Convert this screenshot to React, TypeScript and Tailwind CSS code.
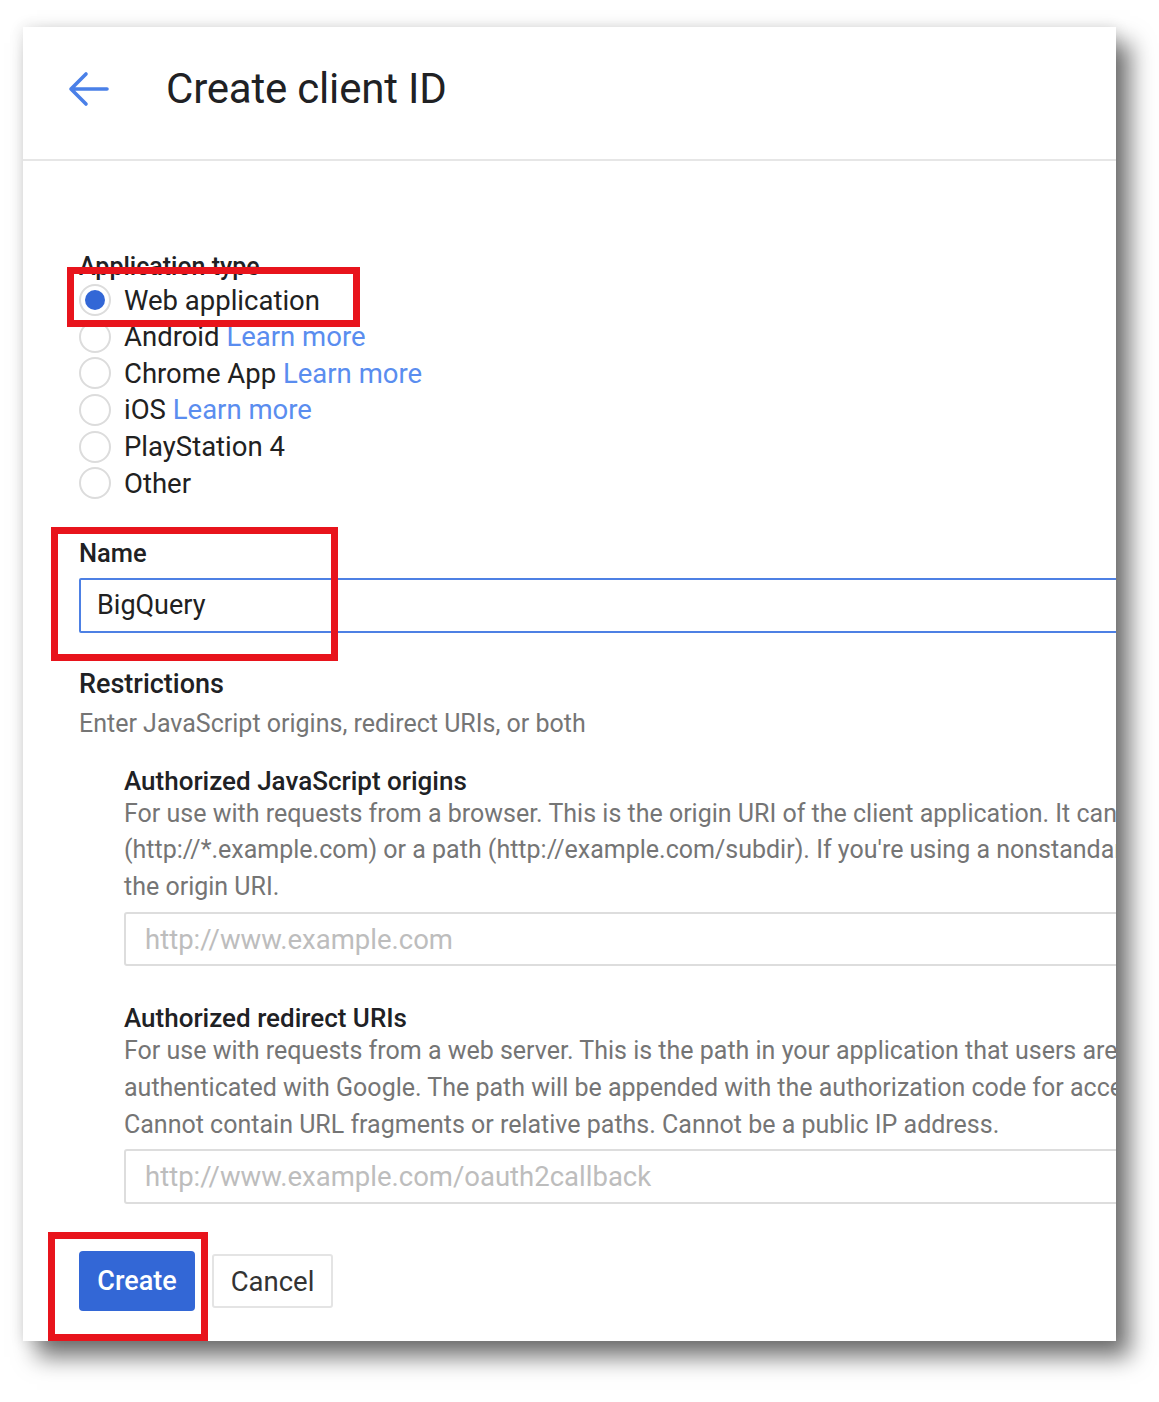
import React from "react";

const radios = [
  { label: "Web application", link: false, checked: true },
  { label: "Android", link: true, checked: false },
  { label: "Chrome App", link: true, checked: false },
  { label: "iOS", link: true, checked: false },
  { label: "PlayStation 4", link: false, checked: false },
  { label: "Other", link: false, checked: false },
];

const jsLines = [
  "For use with requests from a browser. This is the origin URI of the client application. It can't contain a wildcard",
  "(http://*.example.com) or a path (http://example.com/subdir). If you're using a nonstandard port, you must include it in",
  "the origin URI.",
];

const redirectLines = [
  "For use with requests from a web server. This is the path in your application that users are redirected to after they have",
  "authenticated with Google. The path will be appended with the authorization code for access. Must have a protocol.",
  "Cannot contain URL fragments or relative paths. Cannot be a public IP address.",
];

const Radio = ({ checked }: { checked: boolean }) => (
  <div className="w-[32px] h-[32px] rounded-full border-2 border-[#dcdcdc] flex items-center justify-center shrink-0">
    {checked && <div className="w-[20px] h-[20px] rounded-full bg-[#3367d6]" />}
  </div>
);

const RedBox = ({ className }: { className: string }) => (
  <div className={"absolute border-[7px] border-[#e8141c] pointer-events-none " + className} />
);

export default function App() {
  return (
    <div className="w-[1159px] h-[1402px] bg-white overflow-hidden" style={{ fontFamily: "Roboto, 'Noto Sans', sans-serif" }}>
      <div className="relative ml-[23px] mt-[27px] w-[1093px] h-[1314px] bg-white overflow-hidden shadow-[14px_16px_22px_rgba(0,0,0,0.55),0_0_14px_rgba(0,0,0,0.12)]">
        {/* header */}
        <div className="h-[134px] flex items-center pb-[10px] border-b-2 border-[#e6e6e6]">
          <svg width="42" height="36" viewBox="0 0 42 36" className="ml-[44px] mt-[2px]">
            <path d="M40 18 H4 M19 3 L4 18 L19 33" fill="none" stroke="#4a80e8" strokeWidth="3.6" strokeLinecap="round" strokeLinejoin="round" />
          </svg>
          <div className="ml-[57px] text-[42px] text-[#202124] tracking-[-0.2px]">Create client ID</div>
        </div>

        {/* body */}
        <div className="pl-[56px] pt-[91px]">
          <div className="text-[25px] leading-[30px] font-medium text-[#202124] whitespace-nowrap">Application type</div>
          <div className="flex flex-col">
            {radios.map((r) => (
              <div key={r.label} className="flex items-center gap-[13px] h-[36.6px] text-[27.5px] text-[#212121]">
                <Radio checked={r.checked} />
                <span className="whitespace-nowrap">
                  {r.label}
                  {r.link && <span className="text-[#5a8def]"> Learn more</span>}
                </span>
              </div>
            ))}
          </div>

          <div className="mt-[36px] text-[25.5px] leading-[30px] font-medium text-[#202124]">Name</div>
          <div className="mt-[10px] w-[1100px] h-[55px] border-2 border-[#4d80e4] rounded-[2px] flex items-center pl-[16px] text-[27px] text-[#212121]">
            BigQuery
          </div>

          <div className="mt-[36px] text-[27px] leading-[30px] font-medium text-[#202124]">Restrictions</div>
          <div className="mt-[10px] text-[25px] leading-[30px] text-[#757575] whitespace-nowrap">
            Enter JavaScript origins, redirect URIs, or both
          </div>

          <div className="pl-[45px]">
            <div className="mt-[27px] text-[26px] leading-[30px] font-medium text-[#202124] whitespace-nowrap">
              Authorized JavaScript origins
            </div>
            {jsLines.map((l) => (
              <div key={l} className="text-[25px] leading-[36.6px] text-[#757575] whitespace-nowrap">{l}</div>
            ))}
            <div className="mt-[7px] w-[1100px] h-[54px] border-2 border-[#dddddd] rounded-[3px] flex items-center pl-[19px] text-[27.5px] text-[#bdbdbd] whitespace-nowrap">
              http://www.example.com
            </div>

            <div className="mt-[37px] text-[26px] leading-[30px] font-medium text-[#202124] whitespace-nowrap">
              Authorized redirect URIs
            </div>
            {redirectLines.map((l) => (
              <div key={l} className="text-[25px] leading-[36.6px] text-[#757575] whitespace-nowrap">{l}</div>
            ))}
            <div className="mt-[6px] w-[1100px] h-[55px] border-2 border-[#dddddd] rounded-[3px] flex items-center pl-[19px] text-[27.5px] text-[#bdbdbd] whitespace-nowrap">
              http://www.example.com/oauth2callback
            </div>
          </div>

          <div className="mt-[47px] flex items-center gap-[17px]">
            <button className="w-[116px] h-[60px] rounded-[4px] bg-[#3367d6] text-white text-[27px] font-medium">Create</button>
            <button className="w-[121px] h-[54px] rounded-[3px] border-2 border-[#e4e4e4] bg-white text-[#333] text-[27.5px]">Cancel</button>
          </div>
        </div>

        <RedBox className="left-[44px] top-[240px] w-[293px] h-[60px]" />
        <RedBox className="left-[28px] top-[500px] w-[287px] h-[134px]" />
        <RedBox className="left-[25px] top-[1205px] w-[160px] h-[109px]" />
      </div>
    </div>
  );
}
